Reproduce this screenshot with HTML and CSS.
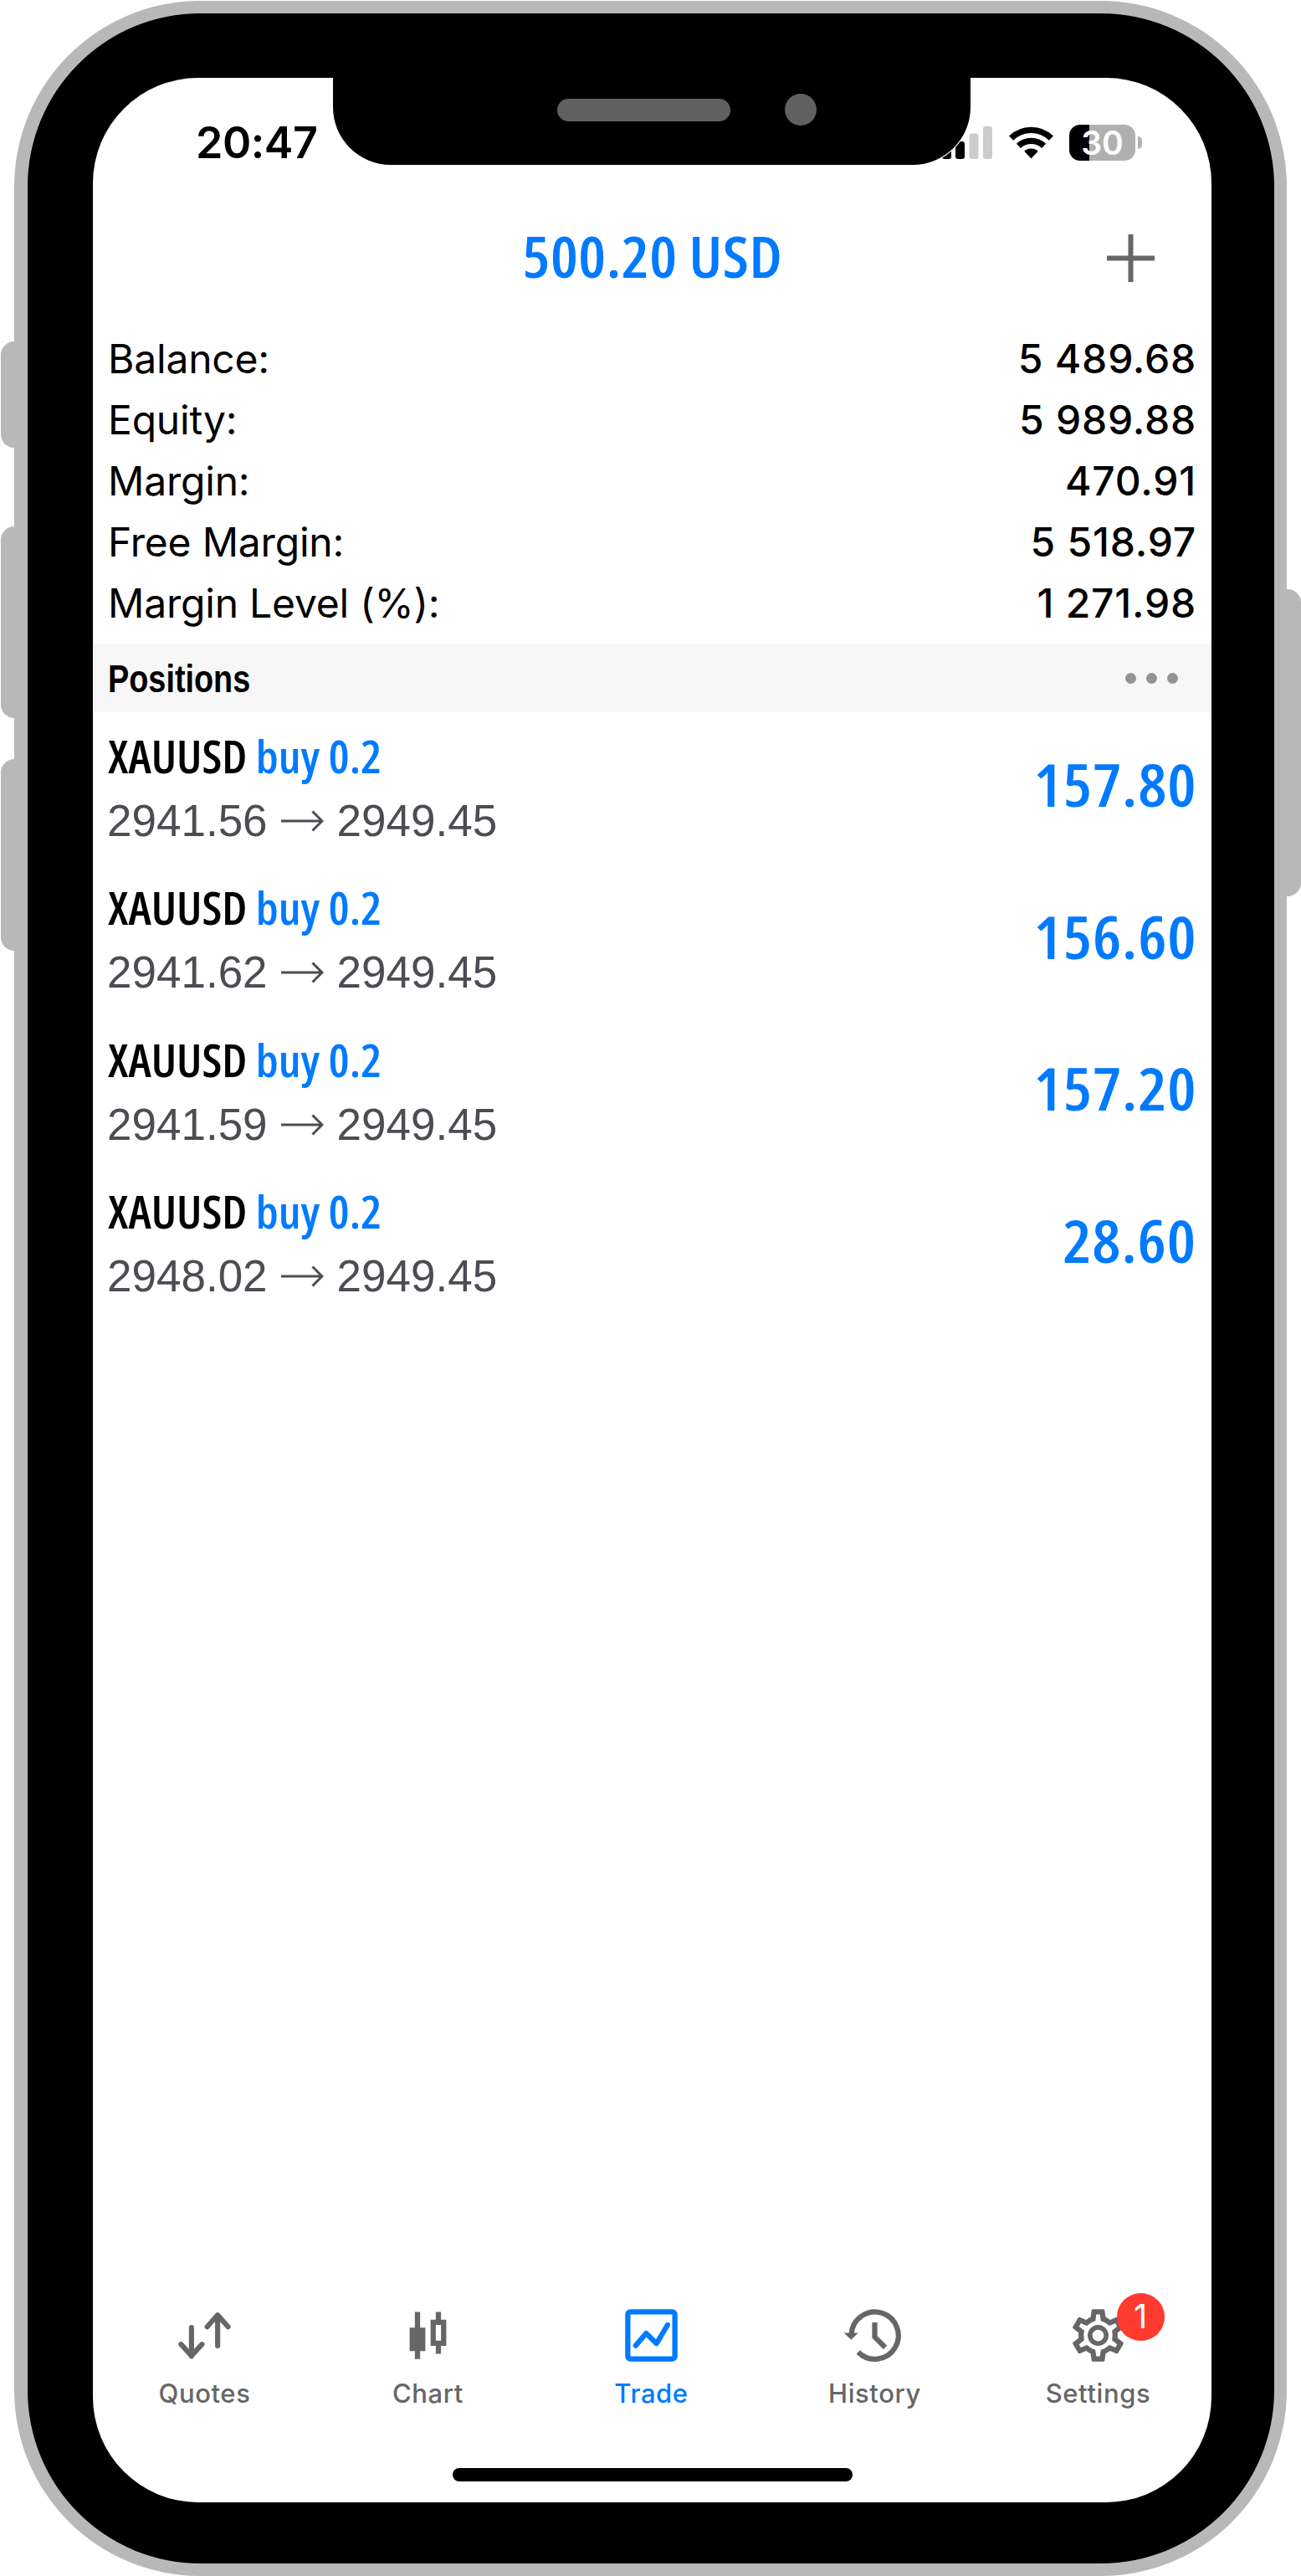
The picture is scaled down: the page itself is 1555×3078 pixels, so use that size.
FILE: index.html
```html
<!DOCTYPE html>
<html lang="en">
<head>
  <meta charset="UTF-8" />
  <title>Trade</title>
  <link rel="stylesheet" href="styles.css">
</head>
<body>
  <div class="phone">
    <div class="side-btn mute"></div>
    <div class="side-btn vol-up"></div>
    <div class="side-btn vol-down"></div>
    <div class="side-btn power"></div>

    <div class="screen">
      <div class="status-bar">
        <span class="time">20:47</span>
        <div class="status-icons">
          <svg class="signal" width="60" height="39" viewBox="0 0 60 39">
            <rect x="0" y="27" width="11" height="12" rx="3" fill="#000" />
            <rect x="16" y="18" width="11" height="21" rx="3" fill="#000" />
            <rect x="32.5" y="8.5" width="11" height="30.5" rx="3" fill="#ccc" />
            <rect x="49" y="0" width="11" height="39" rx="3" fill="#ccc" />
          </svg>
          <svg class="wifi" width="53" height="39" viewBox="0 0 53 39">
            <path d="M2.6 14.1a34.2 34.2 0 0 1 47.8 0" fill="none" stroke="#000" stroke-width="7.4" />
            <path d="M11.4 23.4a22 22 0 0 1 30.2 0" fill="none" stroke="#000" stroke-width="7.4" />
            <path d="M26.5 38.6l-8.2-8.8a12 12 0 0 1 16.4 0z" fill="#000" />
          </svg>
          <div class="battery">
            <div class="battery-body"><span>30</span></div>
            <div class="battery-nub"></div>
          </div>
        </div>
      </div>
      <div class="notch">
        <div class="speaker"></div>
        <div class="camera"></div>
      </div>

      <header class="header">
        <h1>500.20 USD</h1>
        <svg class="add" width="57" height="57" viewBox="0 0 57 57">
          <path d="M28.5 0v57M0 28.5h57" stroke="#666" stroke-width="6" />
        </svg>
      </header>

      <div class="summary">
        <div class="row"><span>Balance:</span><span class="value">5 489.68</span></div>
        <div class="row"><span>Equity:</span><span class="value">5 989.88</span></div>
        <div class="row"><span>Margin:</span><span class="value">470.91</span></div>
        <div class="row"><span>Free Margin:</span><span class="value">5 518.97</span></div>
        <div class="row"><span>Margin Level (%):</span><span class="value">1 271.98</span></div>
      </div>

      <div class="section-bar">
        <h2>Positions</h2>
        <div class="dots"><i></i><i></i><i></i></div>
      </div>

      <div class="positions">
        <div class="position">
          <div>
            <div class="symbol">XAUUSD <span>buy 0.2</span></div>
            <div class="price">2941.56
              <svg width="51" height="26" viewBox="0 0 51 26"><path d="M0 13h49M37.5 1.5L49 13 37.5 24.5" /></svg>
              2949.45</div>
          </div>
          <div class="profit">157.80</div>
        </div>
        <div class="position">
          <div>
            <div class="symbol">XAUUSD <span>buy 0.2</span></div>
            <div class="price">2941.62
              <svg width="51" height="26" viewBox="0 0 51 26"><path d="M0 13h49M37.5 1.5L49 13 37.5 24.5" /></svg>
              2949.45</div>
          </div>
          <div class="profit">156.60</div>
        </div>
        <div class="position">
          <div>
            <div class="symbol">XAUUSD <span>buy 0.2</span></div>
            <div class="price">2941.59
              <svg width="51" height="26" viewBox="0 0 51 26"><path d="M0 13h49M37.5 1.5L49 13 37.5 24.5" /></svg>
              2949.45</div>
          </div>
          <div class="profit">157.20</div>
        </div>
        <div class="position">
          <div>
            <div class="symbol">XAUUSD <span>buy 0.2</span></div>
            <div class="price">2948.02
              <svg width="51" height="26" viewBox="0 0 51 26"><path d="M0 13h49M37.5 1.5L49 13 37.5 24.5" /></svg>
              2949.45</div>
          </div>
          <div class="profit">28.60</div>
        </div>
      </div>

      <nav class="tabs">
        <div class="tab">
          <div class="icon">
            <svg viewBox="0 0 24 24" fill="none" stroke="currentColor" stroke-width="1.95" stroke-linecap="round" stroke-linejoin="round">
              <path d="M7 9v11M3 15.400l4 4.400 4-4.400M17 16V5M13 8.700l4-4.500 4 4.500" />
            </svg>
          </div>
          <span>Quotes</span>
        </div>
        <div class="tab">
          <div class="icon">
            <svg viewBox="0 0 24 24" fill="currentColor">
              <path d="M7 3h2v6h2v9H9v3H7v-3H5V9h2z" />
              <path fill-rule="evenodd" d="M15 3h2v3h2v10h-2v3h-2v-3h-2V6h2zM15 8v6h2V8z" />
            </svg>
          </div>
          <span>Chart</span>
        </div>
        <div class="tab active">
          <div class="icon">
            <svg viewBox="0 0 24 24" fill="none" stroke="currentColor" stroke-width="2" stroke-linecap="round" stroke-linejoin="round">
              <rect x="3" y="3" width="18" height="18" rx="1" />
              <path d="M6 15.900l4-4.700 4 3.900 4.200-7.100" />
            </svg>
          </div>
          <span>Trade</span>
        </div>
        <div class="tab">
          <div class="icon">
            <svg viewBox="0 0 24 24" fill="none" stroke="currentColor" stroke-width="2">
              <path d="M3.060 11.500a9 9 0 1 1 2.600 6.900" />
              <path d="M12 7v5.600l4 4" />
              <path d="M.200 11h5.500l-2.700 2.700z" fill="currentColor" stroke="none" />
            </svg>
          </div>
          <span>History</span>
        </div>
        <div class="tab">
          <div class="icon">
            <svg viewBox="0 0 24 24" fill="currentColor">
              <path d="M19.43 12.98c.04-.32.07-.64.07-.98s-.03-.66-.07-.98l2.11-1.65c.19-.15.24-.42.12-.64l-2-3.46c-.09-.16-.26-.25-.44-.25-.06 0-.12.01-.17.03l-2.49 1c-.52-.4-1.08-.73-1.69-.98l-.38-2.65C14.46 2.18 14.25 2 14 2h-4c-.25 0-.46.18-.49.42l-.38 2.65c-.61.25-1.17.59-1.69.98l-2.49-1c-.06-.02-.12-.03-.18-.03-.17 0-.34.09-.43.25l-2 3.46c-.13.22-.07.49.12.64l2.11 1.65c-.04.32-.07.65-.07.98s.03.66.07.98l-2.11 1.65c-.19.15-.24.42-.12.64l2 3.46c.09.16.26.25.44.25.06 0 .12-.01.17-.03l2.49-1c.52.4 1.08.73 1.69.98l.38 2.65c.03.24.24.42.49.42h4c.25 0 .46-.18.49-.42l.38-2.65c.61-.25 1.17-.59 1.69-.98l2.49 1c.06.02.12.03.18.03.17 0 .34-.09.43-.25l2-3.46c.12-.22.07-.49-.12-.64l-2.11-1.65zm-1.98-1.71c.04.31.05.52.05.73 0 .21-.02.43-.05.73l-.14 1.13.89.7 1.08.84-.7 1.21-1.27-.51-1.04-.42-.9.68c-.43.32-.84.56-1.25.73l-1.06.43-.16 1.13-.2 1.35h-1.4l-.19-1.35-.16-1.13-1.06-.43c-.43-.18-.83-.41-1.23-.71l-.91-.7-1.06.43-1.27.51-.7-1.21 1.08-.84.89-.7-.14-1.13c-.03-.31-.05-.54-.05-.74s.02-.43.05-.73l.14-1.13-.89-.7-1.08-.84.7-1.21 1.27.51 1.04.42.9-.68c.43-.32.84-.56 1.25-.73l1.06-.43.16-1.13.2-1.35h1.39l.19 1.35.16 1.13 1.06.43c.43.18.83.41 1.23.71l.91.7 1.06-.43 1.27-.51.7 1.21-1.07.85-.89.7.14 1.13zM12 8c-2.21 0-4 1.79-4 4s1.79 4 4 4 4-1.79 4-4-1.79-4-4-4zm0 6.200c-1.200 0-2.200-1-2.200-2.200s1-2.200 2.200-2.200 2.200 1 2.200 2.200-1 2.200-2.200 2.200z" />
            </svg>
            <span class="badge">1</span>
          </div>
          <span>Settings</span>
        </div>
      </nav>
      <div class="home-indicator"></div>
    </div>
  </div>
</body>
</html>
```

FILE: styles.css
```css
* { box-sizing: border-box; margin: 0; padding: 0; }
body { background: #fff; font-family: "Inter", sans-serif; color: #000; }
svg { display: block; }

/* phone frame */
.phone { position: relative; width: 1521px; height: 3077px; margin: 1px 0 0 17px; padding: 77px 75px 72px 78px; background: #000; border: 15px solid #b8b8b8; border-left-width: 16px; border-radius: 222px; }
.side-btn { position: absolute; left: -32px; width: 16px; background: #b8b8b8; border-radius: 16px 0 0 16px; }
.mute { top: 392px; height: 127px; }
.vol-up { top: 613px; height: 229px; }
.vol-down { top: 891px; height: 229px; }
.power { left: auto; right: -32px; top: 688px; width: 17px; height: 367px; border-radius: 0 16px 16px 0; }
.screen { position: relative; display: flex; flex-direction: column; height: 2897px; background: #fff; border-radius: 126px; overflow: hidden; }
.notch { position: absolute; top: 0; left: 287px; width: 762px; height: 104px; background: #000; border-radius: 0 0 69px 69px; box-shadow: 0 0 0 1px #fff; }
.speaker { position: absolute; left: 268px; top: 25px; width: 207px; height: 27px; border-radius: 14px; background: #606060; }
.camera { position: absolute; left: 540px; top: 19px; width: 38px; height: 38px; border-radius: 50%; background: #606060; }

/* status bar */
.status-bar { display: flex; justify-content: space-between; align-items: center; height: 154px; padding: 0 83px 0 123px; }
.time { font-size: 52px; font-weight: 600; letter-spacing: -0.5px; }
.status-icons { display: flex; align-items: center; }
.wifi { margin: 0 19px 0 20px; }
.battery { display: flex; align-items: center; gap: 3px; }
.battery-body { display: flex; align-items: center; justify-content: center; width: 79px; height: 43px; border-radius: 13px; background: linear-gradient(to right, #000 24px, #b0b0b0 24px); color: #fff; font-size: 39px; font-weight: 600; }
.battery-nub { width: 5px; height: 15px; border-radius: 0 5px 5px 0; background: #b0b0b0; }

/* header */
.header { display: grid; grid-template-columns: 1fr auto 1fr; align-items: center; height: 145px; padding: 0 68px 29px; }
.header h1 { grid-column: 2; font-family: "Open Sans", sans-serif; font-size: 69px; font-weight: 600; font-stretch: 75%; letter-spacing: 0.5px; line-height: 116px; color: #007aff; transform: scaleX(1.065); }
.add { justify-self: end; margin-top: 7px; }

/* account summary */
.summary { padding: 0 18px 12px; }
.row { display: flex; justify-content: space-between; font-size: 48px; line-height: 73px; letter-spacing: -0.2px; }
.value { font-weight: 500; letter-spacing: 0.8px; }

.section-bar { display: flex; justify-content: space-between; align-items: center; height: 82px; padding: 0 40px 0 18px; background: #f7f7f7; }
.section-bar h2 { font-family: "Liberation Sans", Arial, sans-serif; font-size: 47px; font-weight: bold; transform: scaleX(0.805); transform-origin: left; }
.dots { display: flex; gap: 12px; }
.dots i { width: 13px; height: 13px; border-radius: 50%; background: #939393; }

/* open positions */
.position { display: flex; justify-content: space-between; align-items: center; height: 181.5px; padding: 0 18px 0 17px; }
.symbol { padding-left: 1px; font-family: "Open Sans", sans-serif; font-size: 54px; font-weight: 600; font-stretch: 75%; line-height: 78px; transform: scaleX(1.042); transform-origin: left; }
.symbol span { color: #007aff; }
.price { display: flex; align-items: center; gap: 16px; font-family: "Liberation Sans", Arial, sans-serif; font-size: 53px; line-height: 78px; color: #4c4c52; }
.price svg { fill: none; stroke: #4c4c52; stroke-width: 3; }
.profit { margin-top: -9px; font-family: "Open Sans", sans-serif; font-size: 71px; font-weight: 600; font-stretch: 75%; letter-spacing: 0.8px; line-height: 78px; color: #007aff; transform: scaleX(1.08); transform-origin: right; }

/* tab bar */
.tabs { display: flex; margin: auto 2px 0 0; }
.tab { flex: 1; display: flex; flex-direction: column; align-items: center; gap: 10px; color: #666; font-size: 31px; font-weight: 500; line-height: 44px; letter-spacing: 0.6px; }
.active { color: #007aff; }
.icon { position: relative; width: 75px; height: 75px; }
.badge { position: absolute; left: 60px; top: -13px; width: 57px; height: 57px; border-radius: 50%; background: #ff3b30; color: #fff; font-size: 40px; font-weight: 400; line-height: 56px; text-align: center; }
.home-indicator { width: 478px; height: 16px; margin: 67px auto 25px; border-radius: 8px; background: #000; }
```
